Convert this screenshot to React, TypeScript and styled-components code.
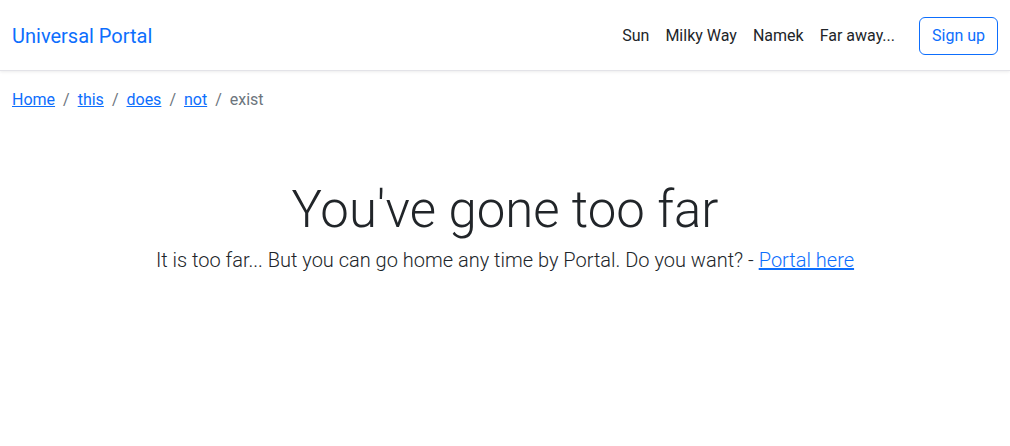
import styled, { createGlobalStyle } from 'styled-components'

const GlobalStyle = createGlobalStyle`
  body {
    margin: 0;
    font-family: Roboto, "Liberation Sans", sans-serif;
    font-size: 16px;
    line-height: 1.5;
    color: #212529;
    background: #fff;
  }
  * { box-sizing: border-box; }
`

const Navbar = styled.nav`
  display: flex;
  align-items: center;
  justify-content: space-between;
  height: 71px;
  padding: 1px 12px 0;
  background: #fff;
  box-shadow: 0 1px 3px rgba(0, 0, 0, 0.08);
  border-bottom: 1px solid #e3e3e8;
`

const Brand = styled.a`
  font-size: 20px;
  color: #0d6efd;
  text-decoration: none;
`

const NavRight = styled.div`
  display: flex;
  align-items: center;
`

const NavLink = styled.a`
  padding: 8px;
  color: #212529;
  text-decoration: none;
`

const SignUp = styled.button`
  margin-left: 16px;
  padding: 6px 12px;
  font: inherit;
  color: #0d6efd;
  background: transparent;
  border: 1px solid #0d6efd;
  border-radius: 6px;
`

const Breadcrumb = styled.ol`
  display: flex;
  list-style: none;
  margin: 0;
  padding: 17px 12px 15px;

  li + li::before {
    content: '/';
    color: #6c757d;
    padding: 0 8px;
  }
`

const Crumb = styled.li<{ $active?: boolean }>`
  color: ${p => (p.$active ? '#6c757d' : 'inherit')};
  a {
    color: #0d6efd;
  }
`

const Hero = styled.main`
  text-align: center;
  padding-top: 52px;
`

const Title = styled.h1`
  margin: 0;
  font-size: 50.9px;
  font-weight: 300;
  line-height: 1.2;
`

const Lead = styled.p`
  margin: 5px 0 0;
  font-size: 20px;
  font-weight: 300;
  a {
    color: #0d6efd;
  }
`

export default function App() {
  const crumbs = ['Home', 'this', 'does', 'not']
  return (
    <>
      <GlobalStyle />
      <Navbar>
        <Brand href="#">Universal Portal</Brand>
        <NavRight>
          <NavLink href="#">Sun</NavLink>
          <NavLink href="#">Milky Way</NavLink>
          <NavLink href="#">Namek</NavLink>
          <NavLink href="#">Far away...</NavLink>
          <SignUp>Sign up</SignUp>
        </NavRight>
      </Navbar>
      <Breadcrumb>
        {crumbs.map(c => (
          <Crumb key={c}><a href="#">{c}</a></Crumb>
        ))}
        <Crumb $active>exist</Crumb>
      </Breadcrumb>
      <Hero>
        <Title>You've gone too far</Title>
        <Lead>
          It is too far... But you can go home any time by Portal. Do you want? - <a href="#">Portal here</a>
        </Lead>
      </Hero>
    </>
  )
}
